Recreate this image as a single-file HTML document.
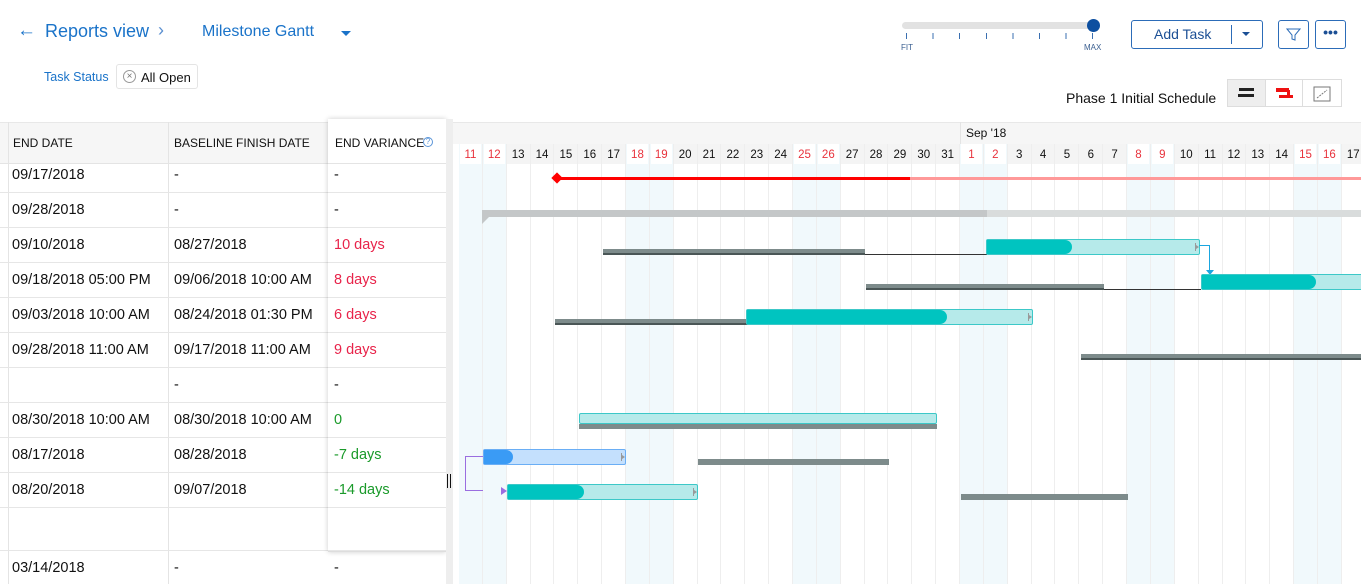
<!DOCTYPE html>
<html><head><meta charset="utf-8"><style>
*{box-sizing:border-box;margin:0;padding:0}
body{width:1361px;height:584px;overflow:hidden;background:#fff;font-family:"Liberation Sans",sans-serif;position:relative;color:#111}
.a{position:absolute}
.blue{color:#1a73c9}
.cols{position:absolute;left:459px;top:144px;display:flex}
.cols div{width:23.86px;flex:none;border-right:1px solid #eee;height:440px;text-align:center;font-size:11.5px;padding-top:5px}
.cols div.we{background:#f1f9fc;color:#e8323c}
.cols div.we span{background:#fff;display:block;margin:-5px 1px 0;padding-top:5px;height:20px}
.cols div span{display:block;height:20px;background:#f4f4f4;margin:-5px 0 0;padding-top:5px}
.row{position:absolute;left:0;width:446px;height:35px;border-bottom:1px solid #e6e6e6;font-size:14.5px}
.row div{position:absolute;top:9px}
.bl{position:absolute;height:6px;background:#7d8b8b;border-bottom:2px solid #4a5656}
.tb{position:absolute;height:16px;background:#b6eaea;border:1px solid #3cc8c8;border-radius:2px}
.tb i{position:absolute;left:0;top:0;bottom:0;background:#00c4c0;border-radius:0 8px 8px 0}
.tb b,.bb b{position:absolute;right:3px;top:3px;width:1px;height:8px;background:#999}
.tb b:after,.bb b:after{content:"";position:absolute;left:1px;top:2px;border-top:2px solid transparent;border-bottom:2px solid transparent;border-left:3px solid #999}
.ln{position:absolute;height:1px;background:#333}
</style></head><body>
<div class="a blue" style="left:17px;top:20px;font-size:19px">←</div>
<div class="a blue" style="left:45px;top:21px;font-size:18px">Reports view</div>
<div class="a blue" style="left:158px;top:20px;font-size:18px;color:#5a8fd0">›</div>
<div class="a blue" style="left:202px;top:23px;font-size:16px">Milestone Gantt</div>
<div class="a" style="left:341px;top:31px;border-left:5px solid transparent;border-right:5px solid transparent;border-top:5px solid #1a73c9"></div>
<div class="a blue" style="left:44px;top:70px;font-size:12.5px">Task Status</div>
<div class="a" style="left:116px;top:64px;width:82px;height:25px;border:1px solid #e4e4e4;border-radius:3px;font-size:13px;padding:5px 0 0 24px">All Open</div>
<div class="a" style="left:123px;top:70px;width:13px;height:13px;border:1px solid #999;border-radius:50%;font-size:10px;line-height:11px;text-align:center;color:#777">×</div>
<div class="a" style="left:902px;top:22px;width:192px;height:7px;background:#e2e2e2;border-radius:4px"></div>
<div class="a" style="left:1087px;top:19px;width:13px;height:13px;background:#0d4fa0;border-radius:50%"></div>
<div class="a" style="left:906px;top:33px;width:190px;height:6px;background:repeating-linear-gradient(90deg,#3a6fb0 0 1px,transparent 1px 26.6px)"></div>
<div class="a" style="left:901px;top:43px;font-size:8px;color:#3a5f90">FIT</div>
<div class="a" style="left:1084px;top:43px;font-size:8px;color:#3a5f90">MAX</div>
<div class="a" style="left:1131px;top:20px;width:132px;height:29px;border:1px solid #2c6cb8;border-radius:3px"></div>
<div class="a" style="left:1154px;top:26px;font-size:14px;color:#1b4f95">Add Task</div>
<div class="a" style="left:1231px;top:25px;width:1px;height:19px;background:#2c6cb8"></div>
<div class="a" style="left:1242px;top:32px;border-left:4px solid transparent;border-right:4px solid transparent;border-top:4px solid #1b4f95"></div>
<div class="a" style="left:1278px;top:20px;width:31px;height:29px;border:1px solid #2c6cb8;border-radius:3px"></div>
<svg class="a" style="left:1286px;top:27px" width="15" height="15"><path d="M1 2h13l-5 6v5l-3 -1v-4z" fill="none" stroke="#2c6cb8"/></svg>
<div class="a" style="left:1315px;top:20px;width:31px;height:29px;border:1px solid #2c6cb8;border-radius:3px;text-align:center;font-size:14px;line-height:22px;color:#1b4f95;font-weight:bold">•••</div>
<div class="a" style="left:1066px;top:90px;font-size:14px">Phase 1 Initial Schedule</div>
<div class="a" style="left:1227px;top:79px;width:115px;height:28px;border:1px solid #ddd;display:flex">
<div style="width:38px;background:#eee;border-right:1px solid #ddd;position:relative"><i class="a" style="left:11px;top:8px;width:15px;height:3px;background:#222"></i><i class="a" style="left:10px;top:14px;width:16px;height:3px;background:#222"></i></div>
<div style="width:38px;border-right:1px solid #ddd;position:relative"><i class="a" style="left:10px;top:8px;width:13px;height:4px;background:#e11"></i><i class="a" style="left:21px;top:10px;width:3px;height:7px;background:#e11"></i><i class="a" style="left:13px;top:15px;width:14px;height:3px;background:#e11"></i></div>
<div style="width:38px;position:relative"><svg class="a" style="left:10px;top:5px" width="18" height="17"><rect x="1" y="2" width="16" height="14" fill="none" stroke="#777"/><path d="M4 13l10-8" stroke="#777" stroke-dasharray="2 1"/></svg></div>
</div>
<div class="a" style="left:0;top:122px;width:452px;height:42px;background:#f6f6f6;border-top:1px solid #e8e8e8;border-bottom:1px solid #e4e4e4"></div>
<div class="a" style="left:8px;top:122px;width:1px;height:462px;background:#e4e4e4"></div>
<div class="a" style="left:168px;top:122px;width:1px;height:462px;background:#e4e4e4"></div>
<div class="a" style="left:13px;top:136px;font-size:12px">END DATE</div>
<div class="a" style="left:174px;top:136px;font-size:12px">BASELINE FINISH DATE</div>
<div class="row" style="top:158px"><div style="left:12px">09/17/2018</div><div style="left:174px">-</div><div style="left:334px">-</div></div>
<div class="row" style="top:193px"><div style="left:12px">09/28/2018</div><div style="left:174px">-</div><div style="left:334px">-</div></div>
<div class="row" style="top:228px"><div style="left:12px">09/10/2018</div><div style="left:174px">08/27/2018</div><div style="left:334px;color:#e8234a">10 days</div></div>
<div class="row" style="top:263px"><div style="left:12px">09/18/2018 05:00 PM</div><div style="left:174px">09/06/2018 10:00 AM</div><div style="left:334px;color:#e8234a">8 days</div></div>
<div class="row" style="top:298px"><div style="left:12px">09/03/2018 10:00 AM</div><div style="left:174px">08/24/2018 01:30 PM</div><div style="left:334px;color:#e8234a">6 days</div></div>
<div class="row" style="top:333px"><div style="left:12px">09/28/2018 11:00 AM</div><div style="left:174px">09/17/2018 11:00 AM</div><div style="left:334px;color:#e8234a">9 days</div></div>
<div class="row" style="top:368px"><div style="left:174px">-</div><div style="left:334px">-</div></div>
<div class="row" style="top:403px"><div style="left:12px">08/30/2018 10:00 AM</div><div style="left:174px">08/30/2018 10:00 AM</div><div style="left:334px;color:#1a9a2a">0</div></div>
<div class="row" style="top:438px"><div style="left:12px">08/17/2018</div><div style="left:174px">08/28/2018</div><div style="left:334px;color:#1a9a2a">-7 days</div></div>
<div class="row" style="top:473px"><div style="left:12px">08/20/2018</div><div style="left:174px">09/07/2018</div><div style="left:334px;color:#1a9a2a">-14 days</div></div>
<div class="row" style="top:508px;height:43px"></div>
<div class="row" style="top:551px;border-bottom:none"><div style="left:12px">03/14/2018</div><div style="left:174px">-</div><div style="left:334px">-</div></div>
<div class="a" style="left:328px;top:119px;width:118px;height:433px;box-shadow:0 0 5px rgba(0,0,0,.2);border-bottom:1px solid #ddd;background:transparent"></div>
<div class="a" style="left:328px;top:119px;width:118px;height:45px;background:#fff;border-bottom:1px solid #e4e4e4"></div>
<div class="a" style="left:335px;top:136px;font-size:12px">END VARIANCE</div>
<div class="a" style="left:423px;top:137px;width:10px;height:10px;border:1px solid #5b95d8;border-radius:50%;font-size:8px;line-height:8px;text-align:center;color:#5b95d8">?</div>
<div class="a" style="left:446px;top:119px;width:7px;height:465px;background:#eee"></div>
<div class="a" style="left:447px;top:474px;width:4px;height:14px;border-left:1px solid #111;border-right:1px solid #111"></div>
<div class="a" style="left:453px;top:122px;width:908px;height:22px;background:#f6f6f6;border-top:1px solid #e8e8e8"></div>
<div class="a" style="left:960px;top:122px;width:1px;height:22px;background:#e4e4e4"></div>
<div class="a" style="left:966px;top:126px;font-size:12px">Sep '18</div>
<div class="cols">
<div class="we"><span>11</span></div><div class="we"><span>12</span></div><div><span>13</span></div><div><span>14</span></div><div><span>15</span></div><div><span>16</span></div><div><span>17</span></div><div class="we"><span>18</span></div><div class="we"><span>19</span></div><div><span>20</span></div><div><span>21</span></div><div><span>22</span></div><div><span>23</span></div><div><span>24</span></div><div class="we"><span>25</span></div><div class="we"><span>26</span></div><div><span>27</span></div><div><span>28</span></div><div><span>29</span></div><div><span>30</span></div><div><span>31</span></div><div class="we"><span>1</span></div><div class="we"><span>2</span></div><div><span>3</span></div><div><span>4</span></div><div><span>5</span></div><div><span>6</span></div><div><span>7</span></div><div class="we"><span>8</span></div><div class="we"><span>9</span></div><div><span>10</span></div><div><span>11</span></div><div><span>12</span></div><div><span>13</span></div><div><span>14</span></div><div class="we"><span>15</span></div><div class="we"><span>16</span></div><div><span>17</span></div>
</div>
<div class="a" style="left:557px;top:177px;width:353px;height:3px;background:#f00"></div>
<div class="a" style="left:910px;top:177px;width:451px;height:3px;background:#f99"></div>
<div class="a" style="left:553px;top:174px;width:8px;height:8px;background:#f00;transform:rotate(45deg)"></div>
<div class="a" style="left:482px;top:210px;width:505px;height:7px;background:#c4c7c8"></div>
<div class="a" style="left:987px;top:210px;width:374px;height:7px;background:#d9dcdc"></div>
<div class="a" style="left:482px;top:217px;border-top:7px solid #c4c7c8;border-right:7px solid transparent"></div>
<div class="bl" style="left:603px;top:249px;width:262px"></div>
<div class="ln" style="left:865px;top:254px;width:122px"></div>
<div class="tb" style="left:986px;top:239px;width:214px"><i style="width:85px"></i><b></b></div>
<div class="a" style="left:1199px;top:245px;width:11px;height:27px;border-top:1px solid #1aa6e0;border-right:1px solid #1aa6e0"></div>
<div class="a" style="left:1206px;top:270px;border-left:4px solid transparent;border-right:4px solid transparent;border-top:5px solid #1aa6e0"></div>
<div class="bl" style="left:866px;top:284px;width:238px"></div>
<div class="ln" style="left:1104px;top:289px;width:97px"></div>
<div class="tb" style="left:1201px;top:274px;width:170px"><i style="width:114px"></i></div>
<div class="bl" style="left:555px;top:319px;width:238px"></div>
<div class="tb" style="left:746px;top:309px;width:287px"><i style="width:200px"></i><b></b></div>
<div class="bl" style="left:1081px;top:354px;width:280px"></div>
<div class="tb" style="left:579px;top:413px;width:358px;height:11px"></div>
<div class="bl" style="left:579px;top:424px;width:358px;border-bottom:none;height:5px"></div>
<div class="a bb" style="left:483px;top:449px;width:143px;height:16px;background:#c4e0fd;border:1px solid #6aaef5;border-radius:2px"><i style="position:absolute;left:0;top:0;bottom:0;width:29px;background:#3a9bf5;border-radius:0 8px 8px 0"></i><b></b></div>
<div class="bl" style="left:698px;top:459px;width:191px;border-bottom:none"></div>
<div class="a" style="left:465px;top:456px;width:18px;height:35px;border-left:1px solid #9a6ee0;border-top:1px solid #9a6ee0;border-bottom:1px solid #9a6ee0"></div>
<div class="a" style="left:501px;top:487px;border-top:4px solid transparent;border-bottom:4px solid transparent;border-left:6px solid #9a6ee0"></div>
<div class="tb" style="left:507px;top:484px;width:191px"><i style="width:76px"></i><b></b></div>
<div class="bl" style="left:961px;top:494px;width:167px;border-bottom:none"></div>
</body></html>
